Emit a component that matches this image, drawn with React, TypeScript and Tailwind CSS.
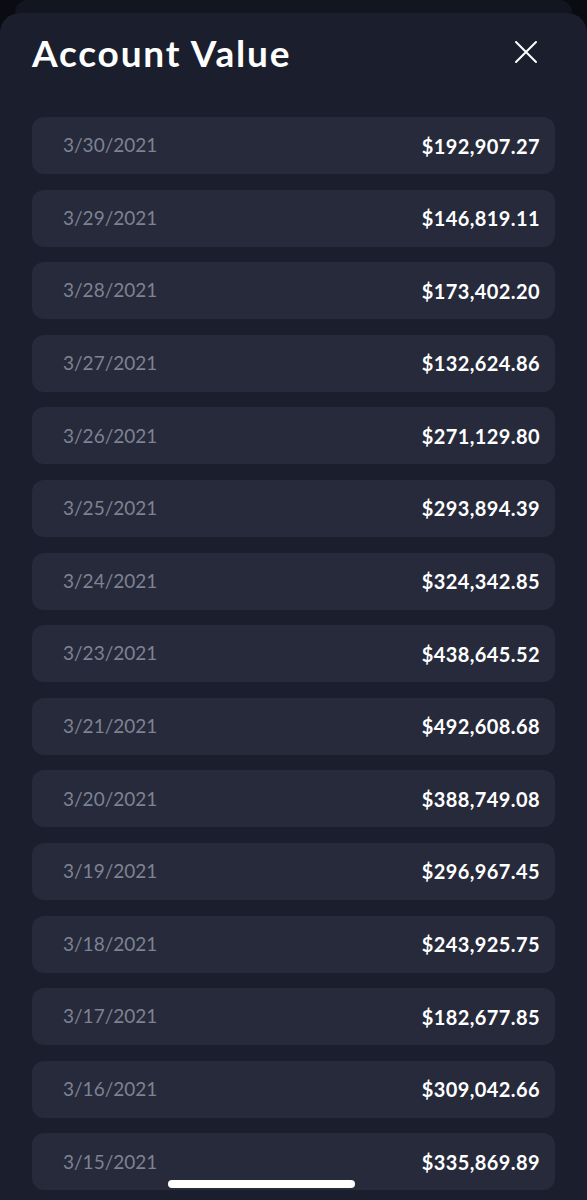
const rows = [
  ["3/30/2021", "$192,907.27"],
  ["3/29/2021", "$146,819.11"],
  ["3/28/2021", "$173,402.20"],
  ["3/27/2021", "$132,624.86"],
  ["3/26/2021", "$271,129.80"],
  ["3/25/2021", "$293,894.39"],
  ["3/24/2021", "$324,342.85"],
  ["3/23/2021", "$438,645.52"],
  ["3/21/2021", "$492,608.68"],
  ["3/20/2021", "$388,749.08"],
  ["3/19/2021", "$296,967.45"],
  ["3/18/2021", "$243,925.75"],
  ["3/17/2021", "$182,677.85"],
  ["3/16/2021", "$309,042.66"],
  ["3/15/2021", "$335,869.89"],
];

export default function App() {
  return (
    <main
      className="relative h-[1200px] w-[587px] overflow-hidden bg-[#0a0c11]"
      style={{ fontFamily: "Lato, 'Noto Sans', sans-serif" }}
    >
      <div className="mx-[15px] h-[13px] rounded-t-[14px] bg-[#131621]" />

      <section className="h-[1187px] rounded-t-[20px] bg-[#1b1f2d]">
        <header className="flex h-[78px] items-center justify-between pl-8 pr-[49px]">
          <h1 className="pt-[2px] text-[37px] font-bold tracking-[1.8px] text-white">Account Value</h1>
          <svg width="24" height="24" viewBox="0 0 24 24" className="text-white">
            <path d="M2 2 L22 22 M22 2 L2 22" stroke="currentColor" strokeWidth="2" strokeLinecap="round" />
          </svg>
        </header>

        <div className="mt-[26px] flex flex-col gap-[15.6px] px-8">
          {rows.map(([date, value]) => (
            <div
              key={date}
              className="flex h-[57px] shrink-0 items-center justify-between rounded-[12px] bg-[#262a3b] pl-[31px] pr-[15px]"
            >
              <span className="text-[19px] text-[#7e8292]">{date}</span>
              <span className="text-[20px] font-bold tracking-[0.4px] text-white">{value}</span>
            </div>
          ))}
        </div>
      </section>

      <div className="absolute bottom-[12px] left-[168px] h-[8px] w-[187px] rounded-full bg-white" />
    </main>
  );
}
